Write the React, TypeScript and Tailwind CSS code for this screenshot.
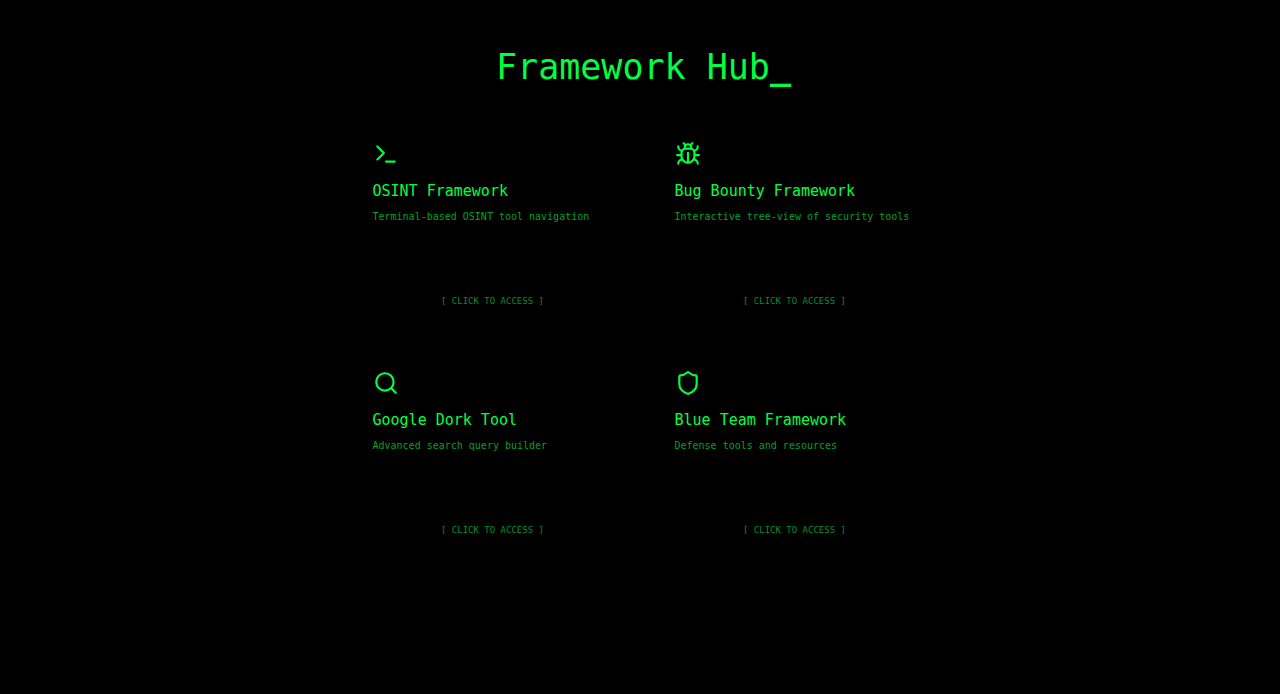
import type { ComponentType, SVGProps } from "react";
import { Search, Shield, Terminal } from "lucide-react";

type Framework = {
  title: string;
  description: string;
  href: string;
  icon: ComponentType<SVGProps<SVGSVGElement>>;
};

function BugIcon(props: SVGProps<SVGSVGElement>) {
  return (
    <svg
      viewBox="0 0 24 24"
      fill="none"
      stroke="currentColor"
      strokeWidth="2"
      strokeLinecap="round"
      strokeLinejoin="round"
      {...props}
    >
      <path d="m8 2 1.88 1.88" />
      <path d="M14.12 3.88 16 2" />
      <path d="M9 7.13v-1a3.003 3.003 0 1 1 6 0v1" />
      <path d="M12 20c-3.3 0-6-2.7-6-6v-3a4 4 0 0 1 4-4h4a4 4 0 0 1 4 4v3c0 3.3-2.7 6-6 6" />
      <path d="M12 20v-9" />
      <path d="M6.53 9C4.6 8.8 3 7.1 3 5" />
      <path d="M6 13H2" />
      <path d="M3 21c0-2.1 1.7-3.9 3.8-4" />
      <path d="M20.97 5c0 2.1-1.6 3.8-3.5 4" />
      <path d="M22 13h-4" />
      <path d="M17.2 17c2.1.1 3.8 1.9 3.8 4" />
    </svg>
  );
}

const frameworks: Framework[] = [
  { title: "OSINT Framework", description: "Terminal-based OSINT tool navigation", href: "#osint", icon: Terminal },
  { title: "Bug Bounty Framework", description: "Interactive tree-view of security tools", href: "#bug-bounty", icon: BugIcon },
  { title: "Google Dork Tool", description: "Advanced search query builder", href: "#google-dork", icon: Search },
  { title: "Blue Team Framework", description: "Defense tools and resources", href: "#blue-team", icon: Shield },
];

function FrameworkCard({ title, description, href, icon: Icon }: Framework) {
  return (
    <a href={href} className="flex min-h-[207px] flex-col px-5 pt-5 pb-[21px]">
      <Icon aria-hidden="true" className="size-[26px]" />
      <h2 className="mt-[14px] text-[15px] leading-5">{title}</h2>
      <p className="mt-2 text-[10px] leading-4 whitespace-nowrap text-[#00a02a]">{description}</p>
      <span className="mt-auto text-center text-[9px] leading-3 text-[#00902a]">[ CLICK TO ACCESS ]</span>
    </a>
  );
}

export default function App() {
  return (
    <main className="flex min-h-screen flex-col items-center bg-black pt-[45px] pb-8 pl-[7px] font-['DejaVu_Sans_Mono',monospace] text-[#00ff41]">
      <h1 className="text-center text-[35px] leading-[44px]">
        Framework Hub<span className="font-bold">_</span>
      </h1>
      <div className="mt-8 grid w-full max-w-[582px] grid-cols-1 gap-[22px] sm:grid-cols-2">
        {frameworks.map((framework) => (
          <FrameworkCard key={framework.title} {...framework} />
        ))}
      </div>
    </main>
  );
}
